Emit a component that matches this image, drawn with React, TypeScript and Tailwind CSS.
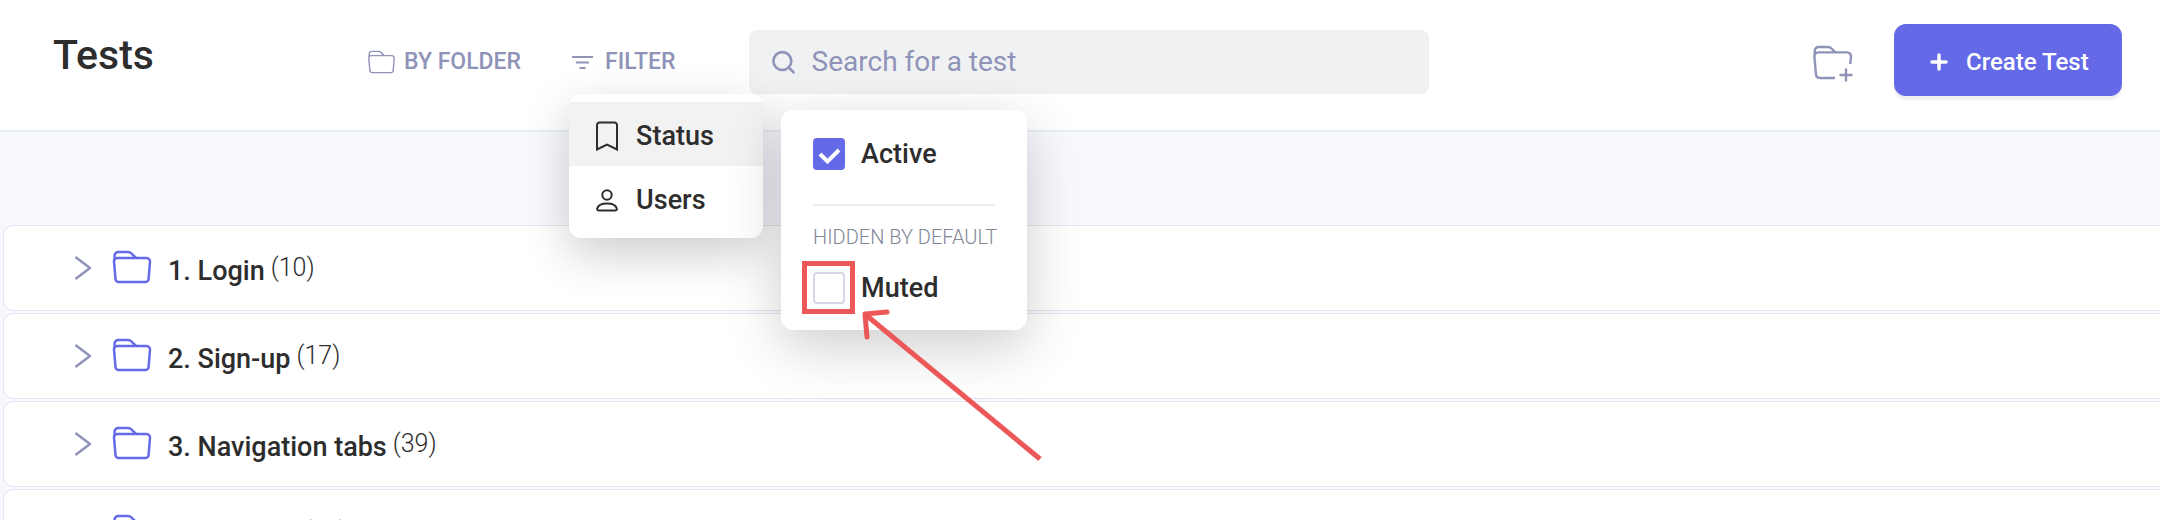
import { useState } from 'react';
import type { ReactNode } from 'react';

type Folder = {
  name: string;
  count: number;
};

const folders: Folder[] = [
  { name: '1. Login', count: 10 },
  { name: '2. Sign-up', count: 17 },
  { name: '3. Navigation tabs', count: 39 },
  { name: '4. Settings', count: 12 },
];

function FolderIcon({ className, strokeWidth = 2 }: { className: string; strokeWidth?: number }) {
  return (
    <svg viewBox="0 0 40 34" fill="none" stroke="currentColor" strokeWidth={strokeWidth} className={className}>
      <path d="M5.2 8H34.6a3.4 3.4 0 0 1 3.4 3.7L36.6 29a3.3 3.3 0 0 1-3.3 3H6.8a3.3 3.3 0 0 1-3.3-3L2 11.7A3.3 3.3 0 0 1 5.2 8Z" />
      <path d="M2.6 10V5.6A3.6 3.6 0 0 1 6.2 2H16a5 5 0 0 1 3.5 1.5L24 8" />
    </svg>
  );
}

function FolderPlusIcon() {
  return (
    <svg viewBox="0 0 42 38" fill="none" stroke="currentColor" strokeWidth="2.4" className="h-[38px] w-[42px]">
      <path d="M23 33H7.8a3.8 3.8 0 0 1-3.8-3.5L2.4 11.5A3.8 3.8 0 0 1 6.2 7.4H35a4 4 0 0 1 4 4.3L38.2 19" />
      <path d="M2.8 10V5.6A3.6 3.6 0 0 1 6.4 2H16a5 5 0 0 1 3.5 1.5L23.5 7.4" />
      <path d="M34 24.5v11M28.5 30h11" strokeLinecap="round" />
    </svg>
  );
}

function CheckOption({
  label,
  checked,
  onChange,
  children,
}: {
  label: string;
  checked: boolean;
  onChange: () => void;
  children?: ReactNode;
}) {
  return (
    <label className="relative flex h-8 cursor-pointer items-center gap-4 text-[27px] font-medium leading-8">
      <input
        type="checkbox"
        checked={checked}
        onChange={onChange}
        className="h-8 w-8 shrink-0 appearance-none rounded border-2 border-[#d5d9e5] bg-white checked:border-[#6469e8] checked:bg-[#6469e8]"
      />
      {checked && (
        <svg viewBox="0 0 32 32" fill="none" stroke="white" strokeWidth="4" className="pointer-events-none absolute left-0 top-0 h-8 w-8">
          <path d="M7 16l7.5 7.5L26 12" />
        </svg>
      )}
      {label}
      {children}
    </label>
  );
}

function StatusMenu() {
  const [active, setActive] = useState(true);
  const [muted, setMuted] = useState(false);

  return (
    <div className="absolute left-[212px] top-4 w-[246px] rounded-xl bg-white px-8 pb-[26px] pt-7 shadow-[0_16px_56px_rgba(0,0,0,0.2)]">
      <CheckOption label="Active" checked={active} onChange={() => setActive(!active)} />
      <hr className="mt-[34px] border-t-2 border-[#ebecee]" />
      <p className="mb-[22px] mt-[18px] whitespace-nowrap text-[20px] font-light leading-[26px] text-[#7f8696]">HIDDEN BY DEFAULT</p>
      <CheckOption label="Muted" checked={muted} onChange={() => setMuted(!muted)}>
        {/* Highlight box and arrow */}
        <svg
          viewBox="0 0 250 210"
          fill="none"
          stroke="#ec5858"
          strokeWidth="5"
          className="pointer-events-none absolute -left-3 -top-3 h-[210px] w-[250px]"
        >
          <rect x="3.5" y="3.5" width="48" height="48" />
          <path d="M239 199L65 55" />
          <path d="M86 52L64 54L66 77" strokeLinecap="round" strokeLinejoin="round" />
        </svg>
      </CheckOption>
    </div>
  );
}

function FilterMenu() {
  return (
    <div className="absolute left-0 top-full z-10 w-[194px] rounded-xl bg-white py-2 shadow-[0_16px_48px_rgba(0,0,0,0.2)]">
      <button className="flex h-16 w-full items-center gap-[18px] bg-[#f2f2f2] pl-[27px] pt-1 text-[27px] font-medium">
        <svg viewBox="0 0 22 30" fill="none" stroke="currentColor" strokeWidth="2" className="h-[30px] w-[22px]">
          <path d="M1 28.5V4a2.5 2.5 0 0 1 2.5-2.5H18.5A2.5 2.5 0 0 1 21 4V28.5L11 23.5Z" />
        </svg>
        Status
      </button>
      <button className="flex h-16 w-full items-center gap-[18px] pl-[27px] pt-1 text-[27px] font-medium">
        <svg viewBox="0 0 22 24" fill="none" stroke="currentColor" strokeWidth="2" className="h-6 w-[22px]">
          <circle cx="11" cy="7" r="4.7" />
          <path d="M2.5 22.5C1.3 22.5 1 21.5 1.2 20.5C2 17.5 6 15.5 11 15.5S20 17.5 20.8 20.5C21 21.5 20.7 22.5 19.5 22.5Z" />
        </svg>
        Users
      </button>
      <StatusMenu />
    </div>
  );
}

export default function App() {
  return (
    <div className="h-screen overflow-hidden bg-[#f8f9fe] font-[Roboto,sans-serif] text-[#2d2d2d]">
      {/* Header */}
      <header className="flex items-center border-b-2 border-[#e9edf6] bg-white pb-[34px] pl-[53px] pr-[38px] pt-6">
        <h1 className="w-[314px] shrink-0 pb-2.5 text-[41px] font-medium leading-[48px]">Tests</h1>

        <div className="mt-1 flex h-16 items-center text-[#8f93b8]">
          <button className="mr-12 flex items-center gap-2 whitespace-nowrap text-[23px] font-medium">
            <FolderIcon className="h-6 w-[29px]" />
            BY FOLDER
          </button>
          <div className="relative flex h-full w-[180px] items-center">
            <button className="flex items-center gap-[11px] px-[3px] text-[23px] font-medium">
              <svg viewBox="0 0 22 14" stroke="currentColor" strokeWidth="2" className="h-3.5 w-[22px]">
                <path d="M0 2h21M4 7.5h13M7.5 13h6" />
              </svg>
              FILTER
            </button>
            <div className="text-[#2d2d2d]">
              <FilterMenu />
            </div>
          </div>
          <label className="flex h-full w-[680px] items-center gap-4 rounded-lg bg-[#f0f1f3] pl-[23px]">
            <svg viewBox="0 0 25 25" fill="none" stroke="currentColor" strokeWidth="2.8" className="h-[25px] w-[25px]">
              <circle cx="11" cy="11" r="9.5" />
              <path d="M17.5 17.5L23 23" strokeLinecap="round" />
            </svg>
            <input
              type="text"
              aria-label="Search for a test"
              placeholder="Search for a test"
              className="w-full bg-transparent text-[28px] outline-none placeholder:text-[#8f93b8]"
            />
          </label>
        </div>

        <div className="ml-auto flex items-center gap-10">
          <button aria-label="New folder" className="pt-2 text-[#8f93b8]">
            <FolderPlusIcon />
          </button>
          <button className="flex h-[72px] w-[228px] items-center gap-[18px] whitespace-nowrap rounded-xl bg-[#6469e8] pl-9 pt-1 text-[24px] font-medium text-white shadow-[0_4px_0_#f1f1f1]">
            <svg viewBox="0 0 18 18" stroke="currentColor" strokeWidth="3.5" strokeLinecap="round" className="h-[18px] w-[18px]">
              <path d="M9 2v14M2 9h14" />
            </svg>
            Create Test
          </button>
        </div>
      </header>

      {/* Folder list */}
      <ul className="flex flex-col gap-0.5 pl-[3px] pt-[93px]">
        {folders.map((folder) => (
          <li
            key={folder.name}
            className="flex h-[86px] shrink-0 items-center rounded-l-[10px] border border-r-0 border-[#e3e6ee] bg-white pl-[71px]"
          >
            <button aria-label={`Expand ${folder.name}`} className="mr-[21px] text-[#8f93b8]">
              <svg viewBox="0 0 16 24" fill="none" stroke="currentColor" strokeWidth="2.4" className="h-6 w-4">
                <path d="M0.5 1L15 12L0.5 23" />
              </svg>
            </button>
            <FolderIcon strokeWidth={2.5} className="mb-0.5 mr-4 h-[34px] w-10 text-[#6469e8]" />
            <span className="pt-1.5 text-[27px] font-medium">{folder.name}</span>
            <span className="ml-1.5 text-[25px] font-light">({folder.count})</span>
          </li>
        ))}
      </ul>
    </div>
  );
}
